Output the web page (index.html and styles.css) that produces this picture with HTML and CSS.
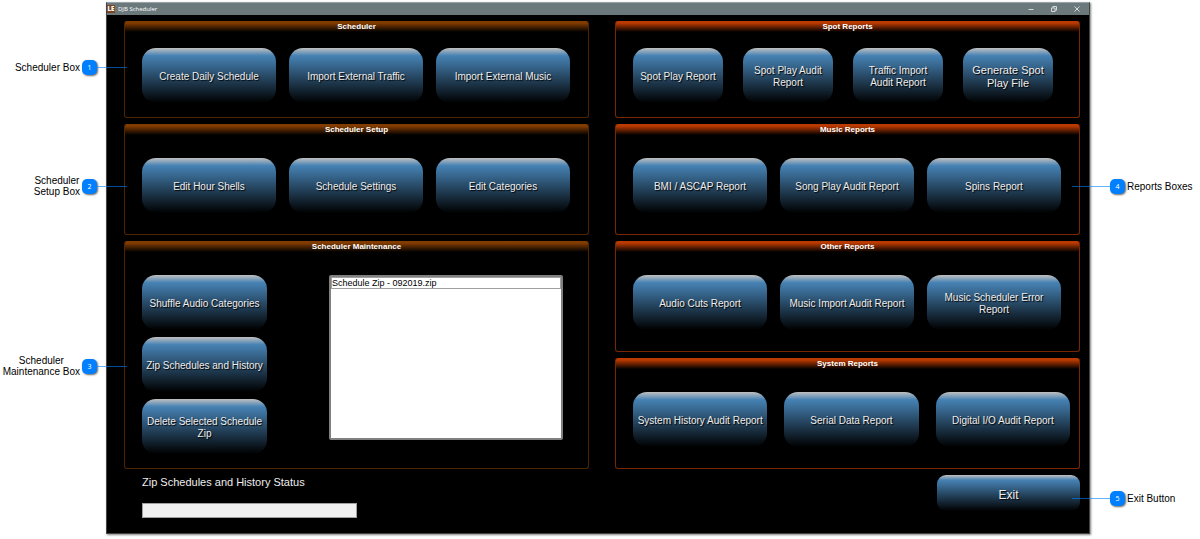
FILE: index.html
```html
<!DOCTYPE html>
<html lang="en">
<head>
    <meta charset="UTF-8">
    <meta name="viewport" content="width=device-width, initial-scale=1.0">
    <title>DJB Scheduler</title>
    <link rel="stylesheet" href="styles.css">
</head>
<body>
    <div class="window">
        <header class="title-bar">
            <span class="app-icon">LE</span>
            <h1 class="app-title">DJB Scheduler</h1>
            <button class="window-button" type="button" aria-label="Minimize">
                <svg width="8" height="8" viewBox="0 0 8 8"><path d="M1.5 4.5h5"/></svg>
            </button>
            <button class="window-button" type="button" aria-label="Restore">
                <svg width="8" height="8" viewBox="0 0 8 8"><path d="M1.5 3h3.5v3.5h-3.5zM2.8 3V1.5h3.7v3.7H5"/></svg>
            </button>
            <button class="window-button" type="button" aria-label="Close">
                <svg width="8" height="8" viewBox="0 0 8 8"><path d="M1.5 1.5l5 5M6.5 1.5l-5 5"/></svg>
            </button>
        </header>

        <main class="content">
            <div class="column scheduler">
                <section class="panel short">
                    <h2 class="panel-title">Scheduler</h2>
                    <div class="button-row">
                        <button class="button" type="button">Create Daily Schedule</button>
                        <button class="button" type="button">Import External Traffic</button>
                        <button class="button" type="button">Import External Music</button>
                    </div>
                </section>

                <section class="panel">
                    <h2 class="panel-title">Scheduler Setup</h2>
                    <div class="button-row">
                        <button class="button" type="button">Edit Hour Shells</button>
                        <button class="button" type="button">Schedule Settings</button>
                        <button class="button" type="button">Edit Categories</button>
                    </div>
                </section>

                <section class="panel maintenance">
                    <h2 class="panel-title">Scheduler Maintenance</h2>
                    <div class="maintenance-body">
                        <div class="button-stack">
                            <button class="button" type="button">Shuffle Audio Categories</button>
                            <button class="button" type="button">Zip Schedules and History</button>
                            <button class="button" type="button">Delete Selected Schedule Zip</button>
                        </div>
                        <select class="zip-list" size="10" aria-label="Schedule zips">
                            <option>Schedule Zip - 092019.zip</option>
                        </select>
                    </div>
                </section>

                <div class="status">
                    <label for="zip-status">Zip Schedules and History Status</label>
                    <progress class="status-bar" id="zip-status" value="0" max="100"></progress>
                </div>
            </div>

            <div class="column reports">
                <section class="panel short">
                    <h2 class="panel-title">Spot Reports</h2>
                    <div class="button-row four">
                        <button class="button" type="button">Spot Play Report</button>
                        <button class="button" type="button">Spot Play Audit Report</button>
                        <button class="button" type="button">Traffic Import Audit Report</button>
                        <button class="button medium" type="button">Generate Spot Play File</button>
                    </div>
                </section>

                <section class="panel">
                    <h2 class="panel-title">Music Reports</h2>
                    <div class="button-row">
                        <button class="button" type="button">BMI / ASCAP Report</button>
                        <button class="button" type="button">Song Play Audit Report</button>
                        <button class="button" type="button">Spins Report</button>
                    </div>
                </section>

                <section class="panel">
                    <h2 class="panel-title">Other Reports</h2>
                    <div class="button-row">
                        <button class="button" type="button">Audio Cuts Report</button>
                        <button class="button" type="button">Music Import Audit Report</button>
                        <button class="button" type="button">Music Scheduler Error Report</button>
                    </div>
                </section>

                <section class="panel">
                    <h2 class="panel-title">System Reports</h2>
                    <div class="button-row wide">
                        <button class="button" type="button">System History Audit Report</button>
                        <button class="button" type="button">Serial Data Report</button>
                        <button class="button" type="button">Digital I/O Audit Report</button>
                    </div>
                </section>

                <button class="button exit" type="button">Exit</button>
            </div>
        </main>
    </div>

    <!-- numbered notes that point into the window -->
    <div class="callout left note-1">
        <span class="callout-text">Scheduler Box</span>
        <span class="callout-number">1</span>
        <span class="callout-line"></span>
    </div>
    <div class="callout left note-2">
        <span class="callout-text">Scheduler<br>Setup Box</span>
        <span class="callout-number">2</span>
        <span class="callout-line"></span>
    </div>
    <div class="callout left note-3">
        <span class="callout-text">Scheduler<br>Maintenance Box</span>
        <span class="callout-number">3</span>
        <span class="callout-line"></span>
    </div>
    <div class="callout right note-4">
        <span class="callout-line"></span>
        <span class="callout-number">4</span>
        <span class="callout-text">Reports Boxes</span>
    </div>
    <div class="callout right note-5">
        <span class="callout-line"></span>
        <span class="callout-number">5</span>
        <span class="callout-text">Exit Button</span>
    </div>
</body>
</html>
```
FILE: styles.css
```css
* {
    margin: 0;
    padding: 0;
    box-sizing: border-box;
}

body {
    position: relative;
    padding: 2px 110px 4px 106px;
    background: #ffffff;
    color: #000000;
    font-family: "Liberation Sans", Arial, sans-serif;
    font-size: 10px;
}

.window {
    background: #000000;
    border: 1px solid #444444;
    border-top-color: #99a3a5;
    box-shadow: 1px 1px 2px rgba(0, 0, 0, 0.5);
}

/* title bar */
.title-bar {
    display: flex;
    align-items: center;
    height: 12px;
    padding-right: 1px;
    background: #6b797c;
    color: #ffffff;
    font-family: "Open Sans", sans-serif;
}

.app-icon {
    width: 8px;
    height: 8px;
    margin-right: 3px;
    background: #7c4420;
    font-size: 6px;
    font-weight: 800;
    line-height: 8px;
    text-align: center;
}

.app-title {
    flex: 1;
    font-size: 6px;
    font-weight: normal;
    line-height: 12px;
}

.window-button {
    display: flex;
    justify-content: center;
    align-items: center;
    width: 23px;
    height: 12px;
    border: none;
    background: transparent;
}

.window-button svg {
    fill: none;
    stroke: #d4dada;
    stroke-width: 1;
}

/* two columns of panels */
.content {
    display: flex;
    gap: 26px;
    padding: 6px 9px 15px 17px;
}

.column {
    display: flex;
    flex: 1;
    flex-direction: column;
    gap: 6px;
}

.scheduler {
    --header: #833c00;
    --edge: #4f2500;
}

.reports {
    --header: #bb3a00;
    --edge: #7a2600;
}

.panel {
    padding-bottom: 21px;
    border: 1px solid var(--edge);
    border-top: none;
    border-radius: 3px;
    background: linear-gradient(var(--header), var(--header) 2px, #000000 11px);
}

.panel-title {
    height: 34px;
    color: #ffffff;
    font-size: 8px;
    font-weight: bold;
    line-height: 11px;
    text-align: center;
}

.short {
    padding-bottom: 14px;
}

.short .panel-title {
    height: 27px;
}

.maintenance {
    padding-bottom: 14px;
}

.button-row {
    display: flex;
    gap: 13px;
    padding: 0 18px 0 17px;
}

.four {
    gap: 20px;
    padding-right: 26px;
}

.wide {
    gap: 17px;
    padding-right: 9px;
}

.button {
    flex: 1;
    height: 55px;
    padding: 3px 2px 0;
    border: none;
    border-radius: 14px;
    background: linear-gradient(#c0c0c0, #4682b4 14%, #000000);
    color: #eeeeee;
    font-family: inherit;
    font-size: 10px;
    line-height: 12px;
    text-shadow: 1px 1px 1px #000000;
    cursor: pointer;
}

.four .button {
    padding: 3px 6px 0;
}

.four .medium {
    font-size: 11px;
    line-height: 13px;
}

.maintenance-body {
    display: flex;
    justify-content: space-between;
    padding: 0 25px 0 17px;
}

.button-stack {
    display: flex;
    flex-direction: column;
    gap: 7px;
    width: 125px;
}

.button-stack .button {
    flex: none;
}

.zip-list {
    width: 234px;
    height: 165px;
    border: 2px solid #808080;
    background: #ffffff;
    color: #000000;
    font-family: inherit;
    font-size: 9px;
    overflow: hidden;
}

.zip-list option {
    min-height: 12px;
    padding: 0;
    border: 1px solid #a0a0a0;
    line-height: 10px;
}

/* bottom row */
.status {
    display: flex;
    flex-direction: column;
    gap: 14px;
    padding-left: 18px;
    color: #eeeeee;
    font-size: 11px;
    line-height: 14px;
}

.status-bar {
    width: 215px;
    height: 15px;
    border: 1px solid #a0a0a0;
    background: #f0f0f0;
    appearance: none;
}

.status-bar::-webkit-progress-bar {
    background: #f0f0f0;
}

.exit {
    flex: none;
    align-self: flex-end;
    width: 143px;
    height: 36px;
    border-radius: 9px;
    font-size: 12px;
}

/* callouts */
.callout {
    position: absolute;
    display: flex;
    align-items: center;
    font-size: 10px;
    line-height: 11px;
}

.left {
    left: 0;
    justify-content: flex-end;
    width: 127px;
}

.right {
    right: 0;
}

.callout-text {
    text-align: center;
    white-space: nowrap;
}

.left .callout-text {
    padding-right: 2px;
}

.right .callout-text {
    width: 75px;
    padding-left: 2px;
    text-align: left;
}

.callout-number {
    width: 15px;
    height: 15px;
    border-radius: 5px;
    background: #0080ff;
    box-shadow: 1px 1px 2px rgba(0, 0, 0, 0.6);
    color: #ffffff;
    font-family: "Open Sans", sans-serif;
    font-size: 7px;
    line-height: 15px;
    text-align: center;
}

.callout-line {
    width: 30px;
    height: 1px;
    background: rgba(0, 128, 255, 0.6);
}

.right .callout-line {
    width: 38px;
}

.note-1 {
    top: 60px;
}

.note-2 {
    top: 175px;
}

.note-3 {
    top: 355px;
}

.note-4 {
    top: 179px;
}

.note-5 {
    top: 491px;
}
```
